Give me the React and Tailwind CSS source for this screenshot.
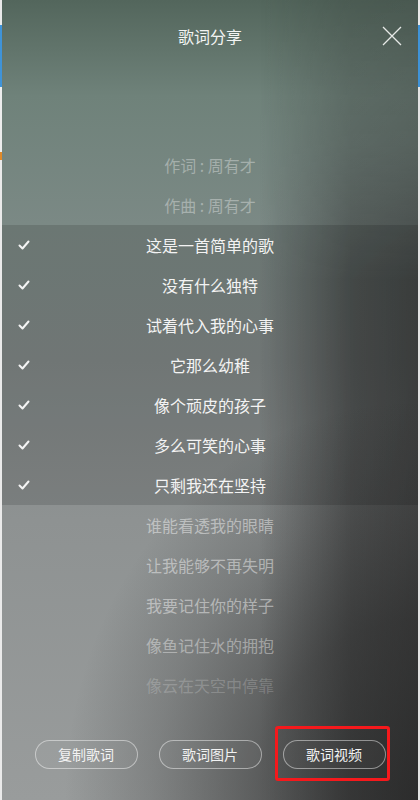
import React from 'react';

const credits = ['作词 : 周有才', '作曲 : 周有才'];

const picked = [
  '这是一首简单的歌',
  '没有什么独特',
  '试着代入我的心事',
  '它那么幼稚',
  '像个顽皮的孩子',
  '多么可笑的心事',
  '只剩我还在坚持',
];

const rest = [
  { text: '谁能看透我的眼睛', tone: 'text-white/45' },
  { text: '让我能够不再失明', tone: 'text-white/45' },
  { text: '我要记住你的样子', tone: 'text-white/45' },
  { text: '像鱼记住水的拥抱', tone: 'text-white/40' },
  { text: '像云在天空中停靠', tone: 'text-white/20' },
];

function Check() {
  return (
    <svg width="12" height="10" viewBox="0 0 12 10" fill="none">
      <path d="M1.5 5.5 L4.5 8.5 L10.5 1.5" stroke="#f4f4f4" strokeWidth="2" strokeLinecap="round" strokeLinejoin="round" />
    </svg>
  );
}

function CloseIcon() {
  return (
    <svg width="20" height="20" viewBox="0 0 20 20" fill="none">
      <path d="M1 1 L19 19 M19 1 L1 19" stroke="#e6e9e7" strokeWidth="1.3" />
    </svg>
  );
}

function PillButton({ children }) {
  return (
    <button className="w-[103px] h-[29px] rounded-full border border-white/45 bg-white/[0.03] text-[14px] text-[#f2f2f2] flex items-center justify-center">
      {children}
    </button>
  );
}

export default function App() {
  return (
    <div
      className="w-[420px] h-[800px] flex bg-[#e6e6e6]"
      style={{ fontFamily: '"Noto Sans CJK SC", "Noto Sans", sans-serif' }}
    >
      {/* page behind the dialog */}
      <div className="w-[2px] flex flex-col">
        <div className="h-[25px] bg-[#e9e9e9]" />
        <div className="h-[62px] bg-[#3f93d8]" />
        <div className="h-[65px] bg-[#ededed]" />
        <div className="h-[8px] bg-[#e08a2a]" />
        <div className="flex-1 bg-[#eaeaea]" />
      </div>

      <div className="flex-1 relative flex flex-col overflow-hidden bg-[linear-gradient(180deg,#53665c_0%,#6f827a_12%,#7b8985_28%,#818887_45%,#8e9292_65%,#999c9c_100%)]">
        {/* blurred cover shading: dark band on the right, heavier toward the bottom */}
        <div className="absolute inset-0 pointer-events-none bg-[linear-gradient(90deg,rgba(0,0,0,0)_62%,rgba(30,30,30,0.5)_84%,rgba(30,30,30,0.62)_100%)] [mask-image:linear-gradient(180deg,rgba(0,0,0,0.3)_0%,rgba(0,0,0,0.55)_18%,#000_35%,#000_100%)]" />
        <div className="absolute inset-0 pointer-events-none bg-[radial-gradient(ellipse_85%_50%_at_100%_100%,rgba(30,30,30,0.7)_0%,rgba(30,30,30,0.5)_45%,rgba(30,30,30,0.2)_75%,rgba(30,30,30,0)_100%)]" />

        <div className="relative flex flex-col h-full">
          {/* header */}
          <div className="h-[72px] relative flex items-center justify-center">
            <h1 className="text-[16px] text-[#f2f4f3]">歌词分享</h1>
            <button className="absolute right-[16px] top-[26px]">
              <CloseIcon />
            </button>
          </div>

          {/* lyrics */}
          <div className="mt-[73px] flex flex-col">
            {credits.map((line) => (
              <div key={line} className="h-[40px] flex items-center justify-center text-[16px] text-white/35">
                {line}
              </div>
            ))}

            <div className="bg-black/[0.13]">
              {picked.map((line) => (
                <div key={line} className="h-[40px] relative flex items-center justify-center text-[16px] text-[#f3f3f3]">
                  <span className="absolute left-[16px] top-[15px]">
                    <Check />
                  </span>
                  {line}
                </div>
              ))}
            </div>

            {rest.map((line) => (
              <div key={line.text} className={`h-[40px] flex items-center justify-center text-[16px] ${line.tone}`}>
                {line.text}
              </div>
            ))}
          </div>

          {/* actions */}
          <div className="mt-auto pb-[31px] flex justify-center gap-[21px]">
            <PillButton>复制歌词</PillButton>
            <PillButton>歌词图片</PillButton>
            <div className="relative">
              <PillButton>歌词视频</PillButton>
              <span className="absolute left-[-8px] right-[-4px] top-[-14px] bottom-[-12px] border-[3px] border-[#f5191c] rounded-[3px] pointer-events-none" />
            </div>
          </div>
        </div>
      </div>

      <div className="w-[2px] flex flex-col">
        <div className="h-[25px] bg-[#e9e9e9]" />
        <div className="h-[62px] bg-[#3f93d8]" />
        <div className="flex-1 bg-[#e4e4e4]" />
      </div>
    </div>
  );
}
